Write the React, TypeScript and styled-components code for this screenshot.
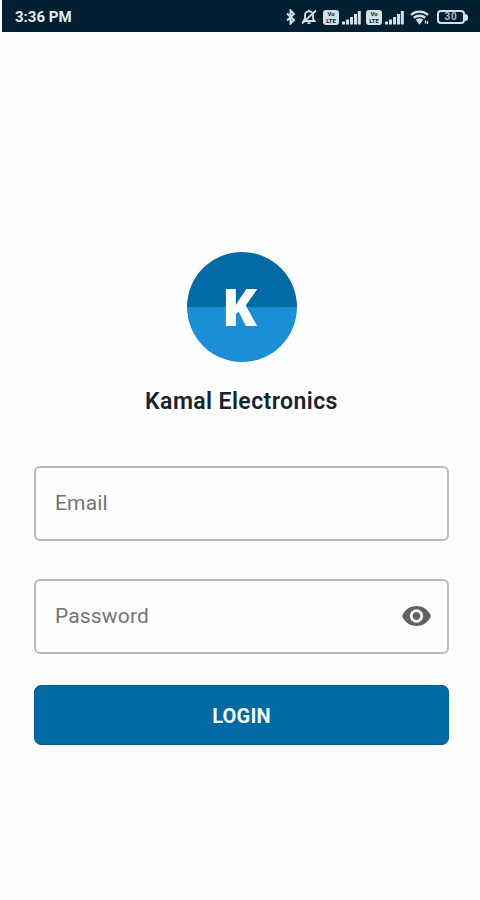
import React from "react";
import styled, { createGlobalStyle } from "styled-components";

const GlobalStyle = createGlobalStyle`
  * { box-sizing: border-box; }
  body { margin: 0; background: #fefefe; font-family: Roboto, "Liberation Sans", sans-serif; }
`;

const Screen = styled.div`
  width: 480px;
  height: 900px;
  background: #fefefe;
  display: flex;
  flex-direction: column;
  overflow: hidden;
`;

const StatusBar = styled.header`
  height: 32px;
  flex: none;
  margin-left: 2px;
  padding: 2px 12px 0 13px;
  background: #032033;
  color: #e4edf2;
  display: flex;
  align-items: center;
  justify-content: space-between;
`;

const Clock = styled.span`
  font-size: 15px;
  font-weight: 700;
  line-height: 18px;
`;

const StatusIcons = styled.div`
  display: flex;
  align-items: center;
`;

const StatusIcon = styled.svg<{ $gap: number }>`
  display: block;
  margin-right: ${(p) => p.$gap}px;
  fill: none;
  stroke: #d5dfe5;
`;

const VolteBadge = styled.span`
  width: 16px;
  height: 15px;
  margin-right: 3px;
  border-radius: 3px;
  background: #d5dfe5;
  color: #082335;
  display: flex;
  flex-direction: column;
  align-items: center;
  justify-content: center;
  font-size: 6px;
  font-weight: 700;
  line-height: 7px;
`;

const Battery = styled.span`
  width: 28px;
  height: 14px;
  border: 2px solid #d5dfe5;
  border-radius: 4px;
  color: #aebbc4;
  display: flex;
  align-items: center;
  justify-content: center;
  font-size: 10px;
  font-weight: 700;
  letter-spacing: 0.8px;
  line-height: 10px;
`;

const BatteryTip = styled.span`
  width: 3px;
  height: 7px;
  border-radius: 0 3px 3px 0;
  background: #d5dfe5;
`;

const LoginForm = styled.main`
  flex: 1;
  padding: 220px 31px 0 34px;
  display: flex;
  flex-direction: column;
`;

const Logo = styled.div`
  width: 110px;
  height: 110px;
  margin-left: 153px;
  padding: 0 5px 3px 0;
  flex: none;
  border-radius: 50%;
  background: linear-gradient(#026ba5 0 54.5px, #1a8fd8 54.5px);
  color: #fff;
  display: flex;
  align-items: center;
  justify-content: center;
  font: 800 51px/60px "Open Sans", sans-serif;
`;

const CompanyName = styled.h1`
  margin: 25px 0 49px;
  color: #14252f;
  font-size: 23px;
  font-weight: 600;
  letter-spacing: 0.42px;
  line-height: 30px;
  text-align: center;
  white-space: nowrap;
`;

const Field = styled.label<{ $gap: number }>`
  height: 75px;
  flex: none;
  margin-bottom: ${(p) => p.$gap}px;
  padding: 0 16px 2px 19px;
  border: 2px solid #bababa;
  border-radius: 6px;
  display: flex;
  align-items: center;
`;

const Input = styled.input`
  flex: 1;
  min-width: 0;
  padding: 0;
  border: 0;
  outline: 0;
  background: transparent;
  color: #333;
  font: 400 21px/28px Roboto, sans-serif;
  letter-spacing: 0.15px;
  &::placeholder { color: #747474; opacity: 1; }
`;

const Eye = styled.svg`
  display: block;
  flex: none;
`;

const LoginButton = styled.button`
  height: 60px;
  flex: none;
  padding: 2px 0 0;
  border: 1px solid #025f9a;
  border-radius: 7px;
  background: #026aa2;
  color: #f2f8fc;
  font: 700 20px/28px Roboto, sans-serif;
  letter-spacing: 0.2px;
`;

const Signal = ({ gap }: { gap: number }) => (
  <StatusIcon $gap={gap} width="19" height="15" viewBox="0 0 19 15" strokeWidth="3">
    <path d="M1.5 14.5v-3M5.5 14.5v-5M9.5 14.5V7M13.5 14.5V4M17.3 14.5V1" />
  </StatusIcon>
);

const Volte = () => (
  <VolteBadge>
    <span>Vo</span>
    <span>LTE</span>
  </VolteBadge>
);

export default function App() {
  return (
    <>
      <GlobalStyle />
      <Screen>
        <StatusBar>
          <Clock>3:36 PM</Clock>
          <StatusIcons>
            <StatusIcon $gap={5} width="10" height="16" viewBox="0 0 10 16" strokeWidth="2">
              <path d="M1 4.5l7 6.5-3.5 3.5v-13L8 5l-7 6.5" />
            </StatusIcon>
            <StatusIcon $gap={6} width="16" height="16" viewBox="0 0 16 16" strokeWidth="1.8">
              <path d="M2.5 12h11L12 9.5V6.3a4 4 0 0 0-8 0v3.2zM6.5 14.2h3M8 2V.8M15 1.5l-14 13" />
            </StatusIcon>
            <Volte />
            <Signal gap={5} />
            <Volte />
            <Signal gap={6} />
            <StatusIcon $gap={7} width="20" height="16" viewBox="0 0 20 16" strokeWidth="2.4">
              <path d="M1 5.8a13 13 0 0 1 17 0M3.8 8.8a9 9 0 0 1 11.4 0M6.5 11.6a5 5 0 0 1 6 0" />
              <path d="M8 12.5h3l-1.5 2zM15.5 11.5v3M17.5 12v3" strokeWidth="1.4" />
            </StatusIcon>
            <Battery>30</Battery>
            <BatteryTip />
          </StatusIcons>
        </StatusBar>
        <LoginForm>
          <Logo>K</Logo>
          <CompanyName>Kamal Electronics</CompanyName>
          <Field $gap={38}>
            <Input type="email" placeholder="Email" aria-label="Email" />
          </Field>
          <Field $gap={31}>
            <Input type="password" placeholder="Password" aria-label="Password" />
            <Eye width="29" height="20" viewBox="1 4.5 22 15" preserveAspectRatio="none" fill="#626262">
              <path d="M12 4.5C7 4.5 2.73 7.61 1 12c1.73 4.39 6 7.5 11 7.5s9.27-3.11 11-7.5c-1.73-4.39-6-7.5-11-7.5zM12 17c-2.76 0-5-2.24-5-5s2.24-5 5-5 5 2.24 5 5-2.24 5-5 5zm0-8c-1.66 0-3 1.34-3 3s1.34 3 3 3 3-1.34 3-3-1.34-3-3-3z" />
            </Eye>
          </Field>
          <LoginButton type="button">LOGIN</LoginButton>
        </LoginForm>
      </Screen>
    </>
  );
}
